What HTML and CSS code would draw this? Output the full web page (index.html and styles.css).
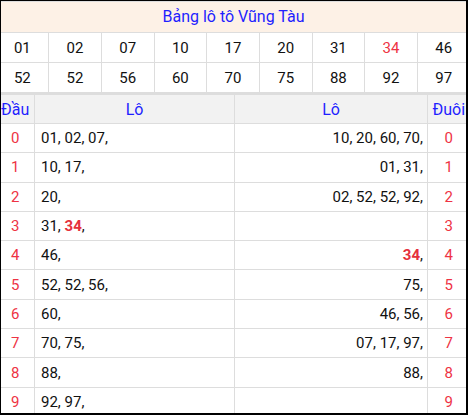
FILE: index.html
```html
<!DOCTYPE html>
<html lang="vi">
<head>
<meta charset="utf-8">
<title>Bảng lô tô Vũng Tàu</title>
<link rel="stylesheet" href="styles.css">
</head>
<body>
<div class="frame">
  <div class="content">
    <div class="title">Bảng lô tô Vũng Tàu</div>
    <div class="nums">
      <div class="n">01</div><div class="n">02</div><div class="n">07</div><div class="n">10</div><div class="n">17</div><div class="n">20</div><div class="n">31</div><div class="n red">34</div><div class="n">46</div>
      <div class="n">52</div><div class="n">52</div><div class="n">56</div><div class="n">60</div><div class="n">70</div><div class="n">75</div><div class="n">88</div><div class="n">92</div><div class="n">97</div>
    </div>
    <div class="lo">
      <div class="h">Đầu</div><div class="h">Lô</div><div class="h">Lô</div><div class="h">Đuôi</div>

      <div class="d">0</div><div class="l"><span>01, 02, 07,</span></div><div class="r"><span>10, 20, 60, 70,</span></div><div class="d">0</div>
      <div class="d">1</div><div class="l"><span>10, 17,</span></div><div class="r"><span>01, 31,</span></div><div class="d">1</div>
      <div class="d">2</div><div class="l"><span>20,</span></div><div class="r"><span>02, 52, 52, 92,</span></div><div class="d">2</div>
      <div class="d">3</div><div class="l"><span>31, <b class="hit">34</b>,</span></div><div class="r"></div><div class="d">3</div>
      <div class="d">4</div><div class="l"><span>46,</span></div><div class="r"><span><b class="hit">34</b>,</span></div><div class="d">4</div>
      <div class="d">5</div><div class="l"><span>52, 52, 56,</span></div><div class="r"><span>75,</span></div><div class="d">5</div>
      <div class="d">6</div><div class="l"><span>60,</span></div><div class="r"><span>46, 56,</span></div><div class="d">6</div>
      <div class="d">7</div><div class="l"><span>70, 75,</span></div><div class="r"><span>07, 17, 97,</span></div><div class="d">7</div>
      <div class="d">8</div><div class="l"><span>88,</span></div><div class="r"><span>88,</span></div><div class="d">8</div>
      <div class="d">9</div><div class="l"><span>92, 97,</span></div><div class="r"></div><div class="d">9</div>
    </div>
  </div>
</div>
</body>
</html>
```

FILE: styles.css
```css
html, body {
  margin: 0;
  padding: 0;
  background: #000;
}
.frame {
  margin: 1px 2px 0 1px;
  height: 412px;
  overflow: hidden;
  background: #fff;
  font-family: Roboto, "Liberation Sans", sans-serif;
  font-size: 15px;
  color: #111;
}
.content {
  width: 474px;
  margin: 0 -4.5px;
}
.title {
  height: 30px;
  line-height: 30px;
  border-top: 1px solid #ddd;
  border-bottom: 1px solid #ddd;
  background: #fdf1e6;
  color: #1f1fff;
  text-align: center;
  font-size: 16px;
}
.nums {
  display: grid;
  grid-template-columns: repeat(9, 1fr);
  grid-auto-rows: 30px;
}
.n {
  display: flex;
  align-items: center;
  justify-content: center;
  border-right: 1px solid #ddd;
  border-bottom: 1px solid #ddd;
}
.red { color: #ee3344; }
.lo {
  display: grid;
  grid-template-columns: 38.5px 200px 193px 42.5px;
  grid-template-rows: 29px;
  grid-auto-rows: 29.3px;
  border-top: 2px solid #ddd;
}
.lo > div {
  display: flex;
  align-items: center;
  border-right: 1px solid #ddd;
  border-bottom: 1px solid #ddd;
  white-space: nowrap;
}
.h {
  background: #f2f2f2;
  color: #1f1fff;
  justify-content: center;
  font-size: 16px;
}
.d {
  justify-content: center;
  color: #ee3344;
}
.l {
  padding-left: 6px;
}
.r {
  justify-content: flex-end;
  padding-right: 4px;
}
.hit {
  color: #e5303c;
  font-weight: bold;
}
```
